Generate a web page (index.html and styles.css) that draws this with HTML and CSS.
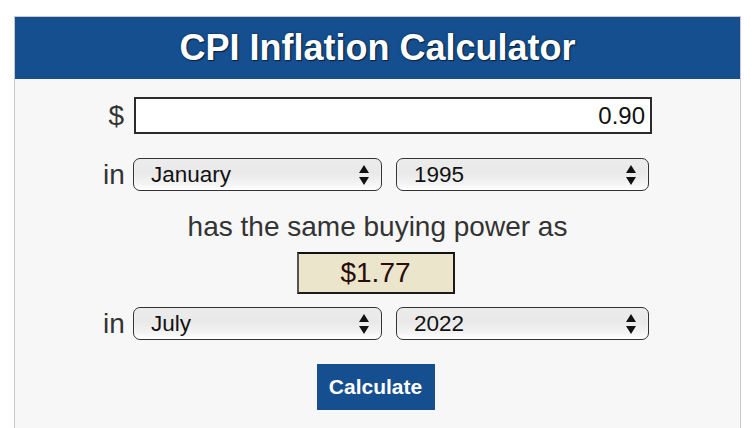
FILE: index.html
```html
<!DOCTYPE html>
<html>
<head>
<meta charset="utf-8">
<link rel="stylesheet" href="styles.css">
</head>
<body>
<div class="calc">
  <div class="head"><h1 class="title">CPI Inflation Calculator</h1></div>
  <div class="form">
    <div class="row row-first">
      <span class="lbl">$</span>
      <div class="amount">0.90</div>
    </div>
    <div class="row row-sel">
      <span class="lbl">in</span>
      <div class="sel sel-month"><span class="sel-text">January</span><svg class="arrows" width="10" height="20" viewBox="0 0 10 20"><path d="M5 0 L10 8 L0 8 Z M0 12 L10 12 L5 20 Z" fill="#111"/></svg></div>
      <div class="sel sel-year"><span class="sel-text">1995</span><svg class="arrows" width="10" height="20" viewBox="0 0 10 20"><path d="M5 0 L10 8 L0 8 Z M0 12 L10 12 L5 20 Z" fill="#111"/></svg></div>
    </div>
    <p class="same">has the same buying power as</p>
    <div class="result-wrap"><div class="result">$1.77</div></div>
    <div class="row row-sel row-third">
      <span class="lbl">in</span>
      <div class="sel sel-month"><span class="sel-text">July</span><svg class="arrows" width="10" height="20" viewBox="0 0 10 20"><path d="M5 0 L10 8 L0 8 Z M0 12 L10 12 L5 20 Z" fill="#111"/></svg></div>
      <div class="sel sel-year"><span class="sel-text">2022</span><svg class="arrows" width="10" height="20" viewBox="0 0 10 20"><path d="M5 0 L10 8 L0 8 Z M0 12 L10 12 L5 20 Z" fill="#111"/></svg></div>
    </div>
    <div class="btn-wrap"><button class="btn">Calculate</button></div>
  </div>
</div>
</body>
</html>
```

FILE: styles.css
```css
html, body {
  margin: 0;
  padding: 0;
  background: #ffffff;
}
body {
  font-family: "Liberation Sans", Arial, sans-serif;
  color: #333333;
}
.calc {
  margin: 16px 0 0 14px;
  width: 725px;
  height: 430px;
  border: 1px solid #c9c9c9;
  background: #f7f7f7;
}
.head {
  background: #154f8f;
  height: 62px;
  display: flex;
  align-items: center;
  justify-content: center;
}
.title {
  margin: 0;
  color: #ffffff;
  font-size: 36px;
  font-weight: bold;
  text-shadow: 0 0 2px #0a2240, 1px 1px 1px #0a2240;
}
.form {
  padding: 18px 88px 0 88px;
}
.row {
  display: flex;
  align-items: center;
}
.lbl {
  width: 21px;
  text-align: right;
  font-size: 28px;
  color: #333;
  margin-right: 10px;
}
.amount {
  height: 33px;
  border: 2px solid #2b2b2b;
  background: #ffffff;
  font-size: 24px;
  color: #111;
  text-align: right;
  line-height: 33px;
  padding-right: 5px;
  box-sizing: content-box;
  width: 509px;
}
.row-sel {
  margin-top: 24px;
  gap: 14px;
}
.row-sel .lbl {
  margin-right: -5px;
}
.sel {
  position: relative;
  height: 31px;
  border: 1.5px solid #333333;
  border-radius: 7px;
  background: linear-gradient(#ececec 0%, #e9e9e9 45%, #f4f4f4 80%, #ffffff 100%);
  box-shadow: inset 0 -1px 2px rgba(255,255,255,0.9);
  display: flex;
  align-items: center;
  box-sizing: content-box;
}
.sel-month { width: 247px; }
.sel-year { width: 251px; }
.sel-text {
  padding-left: 17px;
  font-size: 22.5px;
  color: #111;
}
.arrows {
  position: absolute;
  right: 12px;
  top: 5.5px;
}
.same {
  margin: 19px 0 0 0;
  text-align: center;
  font-size: 28px;
  line-height: 34px;
  color: #333;
}
.result-wrap {
  display: flex;
  justify-content: center;
  margin-top: 8px;
  padding-right: 4px;
}
.result {
  width: 154px;
  height: 38px;
  border: 2px solid #1b1b1b;
  border-left-color: #555;
  border-top-color: #111;
  background: #ebe5cb;
  color: #2a0d0a;
  font-size: 28px;
  line-height: 38px;
  text-align: center;
}
.row-third {
  margin-top: 13px;
}
.btn-wrap {
  display: flex;
  justify-content: center;
  margin-top: 24px;
  padding-right: 4px;
}
.btn {
  width: 118px;
  height: 46px;
  border: none;
  background: #154f8f;
  color: #ffffff;
  font-family: "Liberation Sans", Arial, sans-serif;
  font-size: 21px;
  font-weight: bold;
  padding: 0;
}
```
